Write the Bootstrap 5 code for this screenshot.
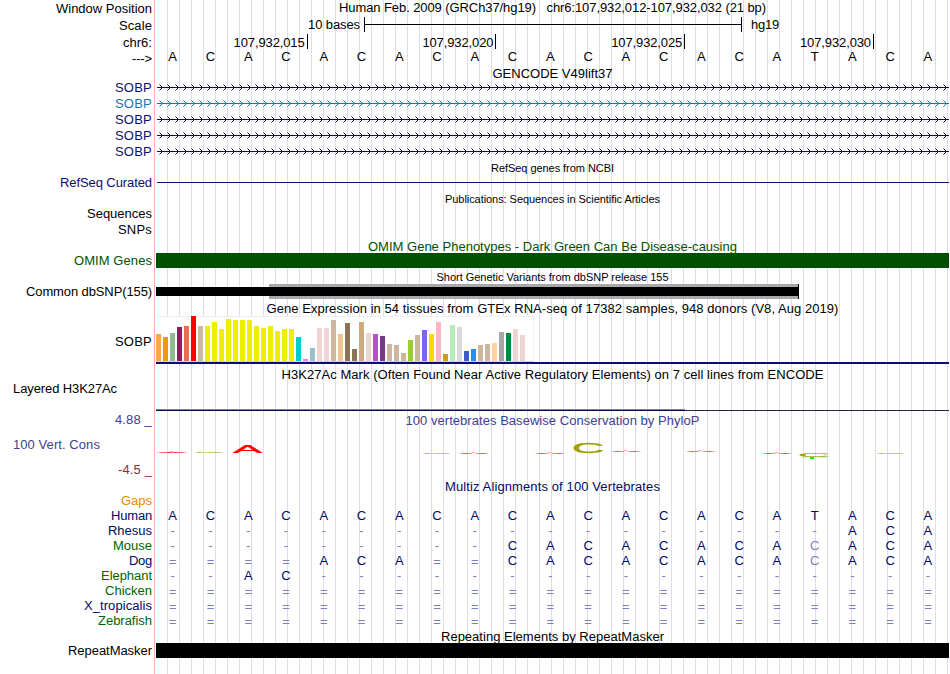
<!DOCTYPE html>
<html lang="en">
<head>
<meta charset="utf-8">
<meta name="viewport" content="width=device-width, initial-scale=1">
<title>Human chr6:107,932,012-107,932,032</title>
<link href="https://cdn.jsdelivr.net/npm/bootstrap@5.3.0/dist/css/bootstrap.min.css" rel="stylesheet">
<style>
body{font:13px/15px "Liberation Sans",Arial,sans-serif;color:#000;background:#fff;overflow:hidden}
.browser{width:949px;height:674px;
  background:linear-gradient(#ffb4b4,#ffb4b4) 154px 0/1px 100% no-repeat,
  repeating-linear-gradient(90deg,#dcdcf8 0 1px,transparent 1px 12px) 167px 0/782px 100% no-repeat}
.side{width:152px;margin-right:4px;white-space:pre}
.side.wide-left{padding-left:13px}
.lane{width:793px}
.heading{white-space:pre;text-align:center}
.heading.fine{font-size:11px;padding-top:1px}
.tall,.seq span{transform:scaleY(1.04);transform-origin:50% 12px}
.fine .tall{transform:none}
.navy{color:#0c0c78}.sky{color:#1673b8}.ink{color:#000a64}.leaf{color:#006400}
.forest{color:#005000}.indigo{color:#404096}.brick{color:#823232}.amber{color:#e68a00}
.seq{display:grid;grid-template-columns:repeat(21,1fr);width:793px;margin-left:-2.2px;padding-top:1px;line-height:13px;text-align:center}
.seq .faint{color:#8080b8}
.seq .double{padding-top:1px}
.solid{height:15px}
.omim{background:#005000}
.gtex{width:378px;height:46px;gap:2px;background:#fff;border-top:1px solid #f0f0f0;border-right:1px solid #f0f0f0;border-bottom:1px solid #d2d2dc}
.gtex i{width:5px;flex:none}
.gtexline{height:2px;background:#0c0c78}
.pos{width:188.8px;padding:2px 2px 0 0;border-right:1px solid #000;height:15px;line-height:13px}
.pos:first-child{width:151.6px}
.scalebar{width:378px;height:15px;border:solid #000;border-width:0 1px}
.scalebar div{height:1px;background:#000;margin-top:7px}
.scalelabel{width:208px;padding-right:4px}
.assembly{padding-left:9px}
svg{display:block;overflow:visible}
</style>
<script src="https://cdn.jsdelivr.net/npm/bootstrap@5.3.0/dist/js/bootstrap.bundle.min.js"></script>
</head>
<body>
<main class="browser" id="browser"></main>
<script>
const out = [];
const fit = (text, w) => `<span class="d-inline-block text-start tall" data-fit="${w || ''}">${text}</span>`;

// One track row: height, label with its width, top pad and colour, lane contents with their top pad
function row(h, label, lw, lpad, color, lane, tpad, wide) {
  out.push(`<div class="d-flex" style="height:${h}px"><div class="side flex-shrink-0 ${color} ${wide ? 'wide-left' : 'text-end'}" style="padding-top:${lpad}px">${label ? fit(label, lw) : ''}</div><div class="lane flex-shrink-0" style="padding-top:${tpad || 0}px">${lane || ''}</div></div>`);
}
const heading = (t, w, c) => `<div class="heading ${c || ''}">${fit(t, w)}</div>`;
const seq = s => `<div class="seq">${[...s].map(c => `<span class="${'-=c'.includes(c) ? 'faint' : ''} ${c === '=' ? 'double' : ''}">${c.toUpperCase()}</span>`).join('')}</div>`;

row(17, 'Window Position', 96, 1, '', heading('Human Feb. 2009 (GRCh37/hg19)   chr6:107,932,012-107,932,032 (21 bp)', 427));
row(17, 'Scale', 33, 1, '', `<div class="d-flex"><div class="scalelabel text-end">${fit('10 bases', 52)}</div><div class="scalebar"><div></div></div><div class="assembly">${fit('hg19', 28)}</div></div>`);
row(15, 'chr6:', 29, 1, '', `<div class="d-flex">${['015', '020', '025', '030'].map(n => `<div class="pos text-end">${fit('107,932,' + n, 71)}</div>`).join('')}</div>`);
row(16, '---&gt;', 20, 2, '', seq('ACACACACACACACACATACA'));
row(15, '', 0, 0, '', heading('GENCODE V49lift37', 120), 1);

// Intron line with strand arrows every 8px
function strand(color) {
  let d = '';
  for (let x = 3.5; x < 792; x += 8) d += `M${x} 4.5l3 3l-3 3`;
  return `<svg width="793" height="16"><rect x="1" y="7" width="792" height="1" fill="${color}"/><path d="${d}" fill="none" stroke="${color}" stroke-width="1"/></svg>`;
}
['navy', 'sky', 'navy', 'navy', 'navy'].forEach(c => row(16, 'SOBP', 37, 0, c, strand(c === 'sky' ? '#1673b8' : '#0c0c78')));

row(15, '', 0, 0, '', heading('RefSeq genes from NCBI', 123, 'fine'));
row(16, 'RefSeq Curated', 92, 0, 'navy', '<svg width="793" height="16"><rect x="1" y="7" width="792" height="1" fill="#0c0c78"/></svg>');
row(15, '', 0, 0, '', heading('Publications: Sequences in Scientific Articles', 215, 'fine'));
row(16, 'Sequences', 65, 0, '');
row(16, 'SNPs', 34, 0, '');
row(15, '', 0, 0, '', heading('OMIM Gene Phenotypes - Dark Green Can Be Disease-causing', 369, 'forest'), 1);
row(16, 'OMIM Genes', 78, 0, 'forest', '<div class="solid omim"></div>');
row(15, '', 0, 0, '', heading('Short Genetic Variants from dbSNP release 155', 232, 'fine'));
row(16, 'Common dbSNP(155)', 126, 0, '', '<svg width="793" height="15"><rect x="113" width="530" height="15" fill="#a8a8a8"/><rect y="3" width="643" height="9"/><rect x="642" width="1" height="15"/></svg>');
row(16, '', 0, 0, '', heading('Gene Expression in 54 tissues from GTEx RNA-seq of 17382 samples, 948 donors (V8, Aug 2019)', 572), 1);

// Tissue colour and bar height in pixels
const tissues = [['#ffa54f',27],['#ee9a00',24],['#8fbc8f',28],['#8b1c62',34],['#ee6a50',35],['#ff0000',45],['#cdb79e',35],
['#eeee00',35],['#eeee00',39],['#eeee00',32],['#eeee00',42],['#eeee00',41],['#eeee00',41],['#eeee00',41],['#eeee00',35],['#eeee00',33],['#eeee00',35],['#eeee00',30],['#eeee00',32],['#eeee00',32],
['#00cdcd',24],['#ee82ee',2],['#9ac0cd',13],['#eed5d2',33],['#eed5d2',33],['#cdb79e',41],['#eec591',27],['#8b7355',38],['#8b7355',12],['#cdaa7d',39],['#eed5d2',28],['#b452cd',27],['#7a378b',25],
['#cdb79e',17],['#cdb79e',16],['#cdb79e',8],['#9acd32',21],['#cdb79e',26],['#7a67ee',31],['#ffd700',27],['#ffb6c1',39],['#cd9b1d',7],['#b4eeb4',36],['#d9d9d9',34],['#3a5fcd',10],['#1e90ff',12],
['#cdb79e',16],['#cdb79e',17],['#ffd39b',18],['#a6a6a6',29],['#008b45',28],['#eed5d2',32],['#eed5d2',26]];
row(48, 'SOBP', 37, 18, '', `<div class="gtex d-flex align-items-end">${tissues.map(t => `<i style="height:${t[1]}px;background:${t[0]};${t[1] === 45 ? 'margin-top:-1px' : ''}"></i>`).join('')}</div><div class="gtexline"></div>`);

row(17, '', 0, 0, '', heading('H3K27Ac Mark (Often Found Near Active Regulatory Elements) on 7 cell lines from ENCODE', 542), 3);
row(30, 'Layered H3K27Ac', 104, 0, '', '<svg width="793" height="30"><rect y="28" width="529" height="1" fill="#7878dc"/><rect y="29" width="529" height="1" fill="#140a32"/><rect x="529" y="29" width="264" height="1" fill="#321e3c"/></svg>', 0, true);
row(17, '4.88 _', 37, 1, 'indigo', heading('100 vertebrates Basewise Conservation by PhyloP', 294, 'indigo'), 2);

// Conservation logo letters stretched to their score: letter, left, top, width, height
const logo = [['A',2,23.4,28,1.6],['C',40,24,28,1],['A',77,17,29,8],['C',267,25,28,1],['A',304,25,28,1],['A',380,25,28,1],['C',418,15,29,10],['A',456,23,28,1],['A',531,23,28,1],['A',607,25,28,1],['C',644,25,29,4],['C',721,25,28,1]];
const glyphs = logo.map(([c, x, y, w, h]) => {
  const sx = w / (c === 'A' ? 66 : 64), sy = h / (c === 'A' ? 68.8 : 71), dx = c === 'A' ? 0 : 5 * sx;
  const color = c === 'A' ? '#ff0000' : '#a0a000';
  const weight = c === 'A' ? (h < 2 ? 7 : 2) : 2;
  return `<text transform="translate(${x - dx} ${y + h - (c === 'A' ? 0 : sy)}) scale(${sx} ${sy})" font-size="100" fill="${color}" stroke="${color}" stroke-width="${weight}">${c}</text>`;
}).join('');
row(34, '100 Vert. Cons', 87, 9, 'indigo', `<svg width="793" height="34">${glyphs}<rect x="644" y="29" width="28" height="1" fill="#00ff00" opacity=".2"/><rect x="654" y="29" width="4" height="2" fill="#00ff00"/></svg>`, 0, true);
row(17, '-4.5 _', 34, 0, 'brick');
row(14, '', 0, 0, '', heading('Multiz Alignments of 100 Vertebrates', 215, 'ink'));
row(15, 'Gaps', 31, 0, 'amber');
[['Human', 41, 'ACACACACACACACACATACA'], ['Rhesus', 44, '------------------ACA'], ['Mouse', 39, '---------CACACACAcACA'],
 ['Dog', 23, '====ACA==CACACACAcACA'], ['Elephant', 51, '--AC-----------------'], ['Chicken', 47, '====================='],
 ['X_tropicalis', 68, '====================='], ['Zebrafish', 54, '=====================']]
.forEach(([n, w, s], i) => row(15, n, w, 0, [0, 1, 3, 6].includes(i) ? 'ink' : 'leaf', `<div class="ink">${seq(s)}</div>`));
row(15, '', 0, 0, '', heading('Repeating Elements by RepeatMasker', 223), 1);
row(15, 'RepeatMasker', 84, 0, '', '<div class="solid bg-black"></div>');

document.getElementById('browser').innerHTML = out.join('');
document.querySelectorAll('[data-fit]').forEach(e => {
  const w = +e.dataset.fit, n = e.textContent.length;
  if (w) e.style.letterSpacing = ((w - e.getBoundingClientRect().width) / n).toFixed(3) + 'px';
});
</script>
</body>
</html>
